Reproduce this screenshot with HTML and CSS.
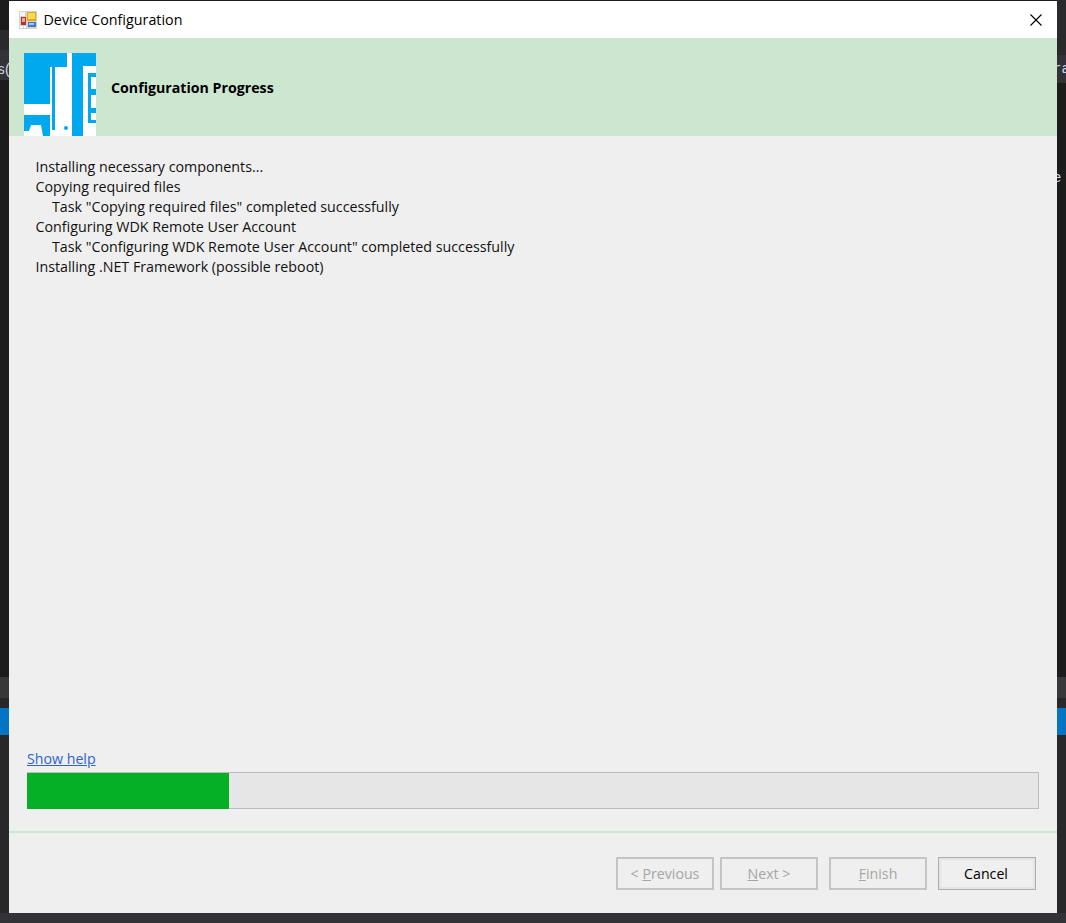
FILE: index.html
```html
<!DOCTYPE html>
<html lang="en">
<head>
<meta charset="utf-8">
<title>Device Configuration</title>
<link rel="stylesheet" href="styles.css">
</head>
<body>
<div class="desktop">
  <div class="strip strip-left">
    <div class="band b-black h30"></div>
    <div class="band b-top h20"></div>
    <div class="band b-mid h30 frag-low"><span class="frag frag-left">s(</span></div>
    <div class="band b-black h597"></div>
    <div class="band b-light h21"></div>
    <div class="band b-mid2 h10"></div>
    <div class="band b-blue h27"></div>
    <div class="band b-mid2 rest"></div>
  </div>
  <main class="dialog">
    <header class="titlebar">
      <svg class="app-icon" viewBox="0 0 18 18" aria-hidden="true">
        <rect width="18" height="18" fill="#d2d2d2"/>
        <rect x="1" y="1" width="5" height="4" fill="#f4f4f4"/>
        <rect x="1" y="15" width="3" height="2" fill="#fff"/>
        <rect x="5" y="15" width="2" height="2" fill="#fff"/>
        <rect x="2" y="6" width="5" height="8" fill="#b8322c"/>
        <rect x="3" y="7" width="3" height="4" fill="#e5a9a0"/>
        <rect x="8" y="1" width="9" height="9" fill="#e8a90f"/>
        <rect x="9" y="2" width="7" height="6" fill="#fbd95a"/>
        <rect x="9" y="11" width="8" height="5" fill="#3f7ad8"/>
        <rect x="10" y="12" width="5" height="2" fill="#a9c8f4"/>
      </svg>
      <span class="title">Device Configuration</span>
      <svg class="close" viewBox="0 0 12 12" aria-hidden="true">
        <path d="M0.5 0.5 L11.5 11.5 M11.5 0.5 L0.5 11.5" stroke="#000" stroke-width="1.1" fill="none"/>
      </svg>
    </header>
    <section class="banner">
      <svg class="logo" viewBox="0 0 72 83" aria-hidden="true">
        <rect width="72" height="83" fill="#fff"/>
        <g fill="#00a9ee">
          <rect x="0" y="0" width="43" height="14"/>
          <rect x="0" y="14" width="26" height="37"/>
          <rect x="28" y="14" width="3" height="63"/>
          <circle cx="42" cy="75" r="2"/>
          <rect x="48" y="0" width="24" height="13"/>
          <rect x="48" y="13" width="11" height="70"/>
          <path fill-rule="evenodd" d="M64 20H72V24H67V36H72V42H67V55H72V60H67V67H72V70H64Z"/>
          <path d="M0 62H26V83H19L17 72H7L5 78H0Z"/>
        </g>
      </svg>
      <h1 class="heading">Configuration Progress</h1>
    </section>
    <section class="content">
      <div class="log">
        <p>Installing necessary components...</p>
        <p>Copying required files</p>
        <p class="task">Task "Copying required files" completed successfully</p>
        <p>Configuring WDK Remote User Account</p>
        <p class="task">Task "Configuring WDK Remote User Account" completed successfully</p>
        <p>Installing .NET Framework (possible reboot)</p>
      </div>
      <a class="help" href="#">Show help</a>
      <div class="progress"><div class="progress-fill"></div></div>
    </section>
    <footer class="footer">
      <button class="btn" disabled>&lt; <u>P</u>revious</button>
      <button class="btn btn-next" disabled><u>N</u>ext &gt;</button>
      <button class="btn btn-finish" disabled><u>F</u>inish</button>
      <button class="btn btn-cancel">Cancel</button>
    </footer>
  </main>
  <div class="strip strip-right">
    <div class="band b-top h55"></div>
    <div class="band b-mid h28"><span class="frag frag-right">ra</span></div>
    <div class="band b-black h594 frag-band"><span class="frag frag-right">e ,</span></div>
    <div class="band b-light h21"></div>
    <div class="band b-mid2 h10"></div>
    <div class="band b-blue h27"></div>
    <div class="band b-mid2 rest"></div>
  </div>
</div>
</body>
</html>
```

FILE: styles.css
```css
* { box-sizing: border-box; }
html, body { margin: 0; height: 100%; }
body {
  background: #333337;
  font-family: "Open Sans", "Noto Sans", sans-serif;
  overflow: hidden;
}
.desktop {
  width: 1066px;
  height: 923px;
  display: grid;
  grid-template-columns: 9px 1048px 9px;
  grid-template-rows: 1px 912px 10px;
  background: #1e1e1e;
}
.desktop::after {
  content: "";
  grid-column: 1 / 4;
  grid-row: 3;
  background: #333337;
}
.strip {
  grid-row: 1 / 3;
  display: flex;
  flex-direction: column;
  overflow: hidden;
}
.strip-left { grid-column: 1; }
.strip-right { grid-column: 3; }
.band { flex: none; overflow: hidden; display: flex; align-items: center; }
.rest { flex: 1; }
.h20 { height: 20px; } .h21 { height: 21px; } .h10 { height: 10px; } .h27 { height: 27px; }
.h28 { height: 28px; } .h30 { height: 30px; }
.h55 { height: 55px; } .h594 { height: 594px; } .h597 { height: 597px; }
.b-top { background: #2a2a2c; }
.b-mid { background: #333337; }
.b-black { background: #1c1c1c; }
.b-light { background: #38383b; }
.b-mid2 { background: #28282a; }
.b-blue { background: #0474c6; }
.frag { flex: none; font: 14px "Liberation Mono", monospace; color: #c8d8e8; white-space: nowrap; }
.frag-left { margin-left: -3px; letter-spacing: -2px; }
.frag-low { padding-top: 10px; }
.frag-right { margin-left: -4px; }
.frag-band { align-items: flex-start; padding-top: 87px; }
.dialog {
  grid-column: 2;
  grid-row: 2;
  display: flex;
  flex-direction: column;
  background: #efefef;
  color: #111;
}
.titlebar {
  flex: none;
  height: 37px;
  background: #fff;
  display: flex;
  align-items: center;
  padding-left: 10px;
  padding-right: 15px;
}
.app-icon { width: 18px; height: 18px; flex: none; }
.title { margin-left: 6.5px; font-size: 14.3px; line-height: 20px; color: #000; }
.close { width: 12px; height: 12px; margin-left: auto; flex: none; }
.banner {
  flex: none;
  height: 98px;
  background: #cde6d0;
  display: flex;
  align-items: flex-end;
  padding-left: 15px;
}
.logo { width: 72px; height: 83px; flex: none; display: block; filter: blur(.6px); }
.heading {
  margin: 0 0 38px 15px;
  font-size: 14.2px;
  line-height: 20px;
  font-weight: 700;
  color: #000;
}
.content {
  flex: 1;
  display: flex;
  flex-direction: column;
  align-items: flex-start;
  padding: 21px 18px 0;
  min-height: 0;
}
.log { flex: 1; padding-left: 8.5px; font-size: 14.25px; line-height: 20px; }
.log p { margin: 0; white-space: nowrap; }
.log .task { padding-left: 16.5px; }
.help {
  font-size: 14.2px;
  line-height: 18px;
  color: #2e62cf;
  text-decoration: underline;
  margin-bottom: 4px;
}
.progress {
  align-self: stretch;
  height: 37px;
  background: #e6e6e6;
  box-shadow: inset 0 0 0 1px #bcbcbc;
  padding-top: 1px;
}
.progress-fill { width: 202px; height: 100%; background: #06b025; }
.footer {
  flex: none;
  margin-top: 22px;
  border-top: 2px solid #cde6d0;
  padding: 24px 21px 23px 0;
  display: flex;
  justify-content: flex-end;
}
.btn {
  width: 98px;
  height: 33px;
  padding: 0;
  font-family: inherit;
  font-size: 14.2px;
  background: #efefef;
  color: #a6a6a6;
  border: 2px solid #c4c4c4;
  margin-left: 6px;
}
.btn u { text-decoration: underline; }
.btn-finish { margin-left: 11px; }
.btn-cancel {
  margin-left: 11px;
  padding-right: 2px;
  color: #000;
  border: 1px solid #adadad;
  box-shadow: inset 0 0 0 2px #e4e4e4;
}
```
